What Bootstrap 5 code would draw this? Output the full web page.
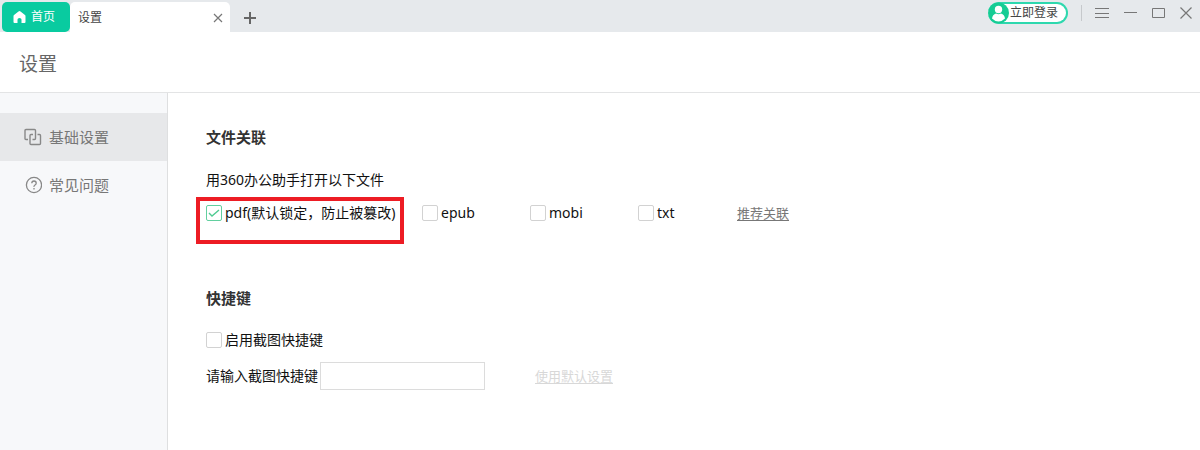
<!DOCTYPE html>
<html lang="zh-CN">
<head>
<meta charset="utf-8">
<meta name="viewport" content="width=device-width, initial-scale=1">
<title>设置</title>
<link href="https://cdn.jsdelivr.net/npm/bootstrap@5.3.0/dist/css/bootstrap.min.css" rel="stylesheet">
<style>
  body { font-family: "Noto Sans", "Noto Sans CJK SC", sans-serif; font-size: 14px; line-height: 20px; color: #111; background: #fff; }
  button { background: none; border: 0; padding: 0; color: inherit; }
  svg { display: block; fill: none; }
  .titlebar { background: #e6e9ec; height: 32px; }
  .tab-btn { height: 30px; font-size: 12px; line-height: 18px; }
  .tab-home { width: 68px; margin-left: 2px; padding-left: 10px; background: #09cba0; color: #fff; border-radius: 5px; }
  .tab-page { width: 160px; padding: 2px 7px 0 8px; background: #fff; color: #444; border-radius: 5px 5px 0 0; }
  .tab-add { margin-left: 14px; }
  .login { height: 22px; margin-top: 2px; padding-right: 8px; border: 2px solid #2ed8ae; border-left: 0; border-radius: 11px; background: #fff; color: #444; font-size: 12px; line-height: 18px; }
  .split { width: 1px; height: 16px; margin: 0 13px; background: #c6c9cc; }
  .win { height: 26px; padding-right: 8px; color: #777; }
  .win-buttons { gap: 15px; }
  .page-head { height: 61px; padding: 4px 19px 0; border-bottom: 1px solid #e3e4e5; }
  .page-head h1 { font-size: 19px; line-height: 28px; color: #666; font-weight: 400; }
  .side { width: 168px; background: #f7f8fa; border-right: 1px solid #dedfe0; padding-top: 20px; }
  .side a { height: 48px; padding-left: 24px; gap: 7px; font-size: 15px; color: #777; text-decoration: none; }
  .side a.active { background: #e7e8ea; }
  .content { padding: 34px 38px 0; }
  h2 { font-size: 15px; line-height: 20px; font-weight: 700; color: #333; }
  .intro { margin: 23px 0 7px; }
  .opt { gap: 3px; }
  .opt .form-check-input { width: 16px; height: 16px; margin: 0; border: 1px solid #d2d2d2; border-radius: 2px; background-color: #fff; }
  .opt .form-check-input:checked { border-color: #62cf9f; background-color: #fff; background-size: 16px; background-image: url("data:image/svg+xml,%3Csvg xmlns='http://www.w3.org/2000/svg' viewBox='0 0 16 16'%3E%3Cpath d='M3 8l3 3 7-6' fill='none' stroke='%2350cb92' stroke-width='1.4'/%3E%3C/svg%3E"); }
  .marked { width: 208px; height: 47px; margin-left: -10px; padding: 2px 0 0 6px; border: 4px solid #ed1c24; }
  .files { gap: 18px; }
  .file-type { width: 90px; padding-top: 6px; }
  .file-txt { width: 81px; }
  .shortcuts { margin-top: 44px; }
  .shortcuts .opt { margin: 22px 0 12px; }
  .text-link { font-size: 13px; color: #777; text-underline-offset: 2px; }
  .files .text-link { padding-top: 6px; }
  .text-link.off { color: #d8d8d8; margin-left: 50px; }
  .key-input { width: 165px; height: 28px; margin-left: 2px; border: 1px solid #dcdcdc; border-radius: 0; }
</style>
</head>
<body class="min-vh-100 d-flex flex-column">
<header class="titlebar d-flex justify-content-between">
  <nav class="d-flex align-items-end">
    <button class="tab-btn tab-home d-flex align-items-center gap-1" type="button">
      <svg width="15" height="14" viewBox="0 0 15 14"><path fill="#fff" d="M7.500 1Q8 1 8.500 1.400L13 5Q13.500 5.500 13.500 6.200V12Q13.500 13 12.500 13H9.500V9.500Q9.500 8 7.500 8T5.500 9.500V13H2.500Q1.500 13 1.500 12V6.200Q1.500 5.500 2 5L6.500 1.400Q7 1 7.500 1Z"/></svg>
      <span>首页</span>
    </button>
    <div class="tab-btn tab-page d-flex align-items-center justify-content-between">
      <span>设置</span>
      <button type="button" aria-label="关闭标签"><svg width="10" height="10" viewBox="0 0 10 10" stroke="#777" stroke-width="1.200"><path d="M1 1l8 8M9 1L1 9"/></svg></button>
    </div>
    <button class="tab-add pb-2" type="button" aria-label="新标签"><svg width="12" height="12" viewBox="0 0 12 12" stroke="#666" stroke-width="2"><path d="M0 6h12M6 0v12"/></svg></button>
  </nav>
  <div class="d-flex align-items-start">
    <button class="login d-flex align-items-center" type="button">
      <svg width="22" height="22" viewBox="0 0 22 22"><circle cx="10.500" cy="11" r="10.500" fill="#16cc94"/><circle cx="10.500" cy="7.500" r="3.700" fill="#fff"/><path fill="#fff" d="M4 16.500Q4.500 12.500 8 11.500Q10.500 13 13 11.500Q16.500 12.500 17 16.500Q14 19.500 10.500 19.500T4 16.500Z"/></svg>
      <span>立即登录</span>
    </button>
    <div class="win d-flex align-items-center">
      <span class="split"></span>
      <div class="win-buttons d-flex align-items-center">
        <button type="button" aria-label="菜单"><svg width="14" height="14" viewBox="0 0 14 14" stroke="currentColor"><path d="M0 2.500h14M0 7.500h14M0 11.500h14"/></svg></button>
        <button type="button" aria-label="最小化"><svg width="13" height="14" viewBox="0 0 13 14" stroke="currentColor"><path d="M0 6.500h13"/></svg></button>
        <button type="button" aria-label="最大化"><svg width="13" height="14" viewBox="0 0 13 14" stroke="currentColor"><path d="M.5 2.500h12v9H.5z"/></svg></button>
        <button type="button" aria-label="关闭"><svg width="12" height="14" viewBox="0 0 12 14" stroke="currentColor" stroke-width="1.200"><path d="M.5 1.500l11 11M11.500 1.500L.5 12.500"/></svg></button>
      </div>
    </div>
  </div>
</header>
<div class="page-head d-flex align-items-center"><h1 class="m-0">设置</h1></div>
<div class="d-flex flex-grow-1">
  <aside class="side flex-shrink-0">
    <a class="active d-flex align-items-center" href="#basic">
      <svg width="18" height="18" viewBox="0 0 18 18" stroke="#888" stroke-width="1.400"><path d="M4 11.500H2Q1 11.500 1 10.500V2.500Q1 1.500 2 1.500H10.500Q11.500 1.500 11.500 2.500V10.500Q11.500 11.500 10.500 11.500H8.500M9 6.500H7Q6 6.500 6 7.500V15.500Q6 16.500 7 16.500H15.500Q16.500 16.500 16.500 15.500V7.500Q16.500 6.500 15.500 6.500H13.500"/></svg>
      <span>基础设置</span>
    </a>
    <a class="d-flex align-items-center" href="#faq">
      <svg width="18" height="18" viewBox="0 0 18 18" stroke="#888" stroke-width="1.300"><circle cx="10" cy="9" r="7.600"/><path d="M7.800 7.300Q7.800 5 10 5T12.200 7.200Q12.200 8.200 11 9T10 10.800M10 12v1.500"/></svg>
      <span>常见问题</span>
    </a>
  </aside>
  <main class="content flex-grow-1">
    <section>
      <h2 class="m-0">文件关联</h2>
      <p class="intro">用360办公助手打开以下文件</p>
      <div class="files d-flex align-items-start">
        <div class="marked"><div class="opt d-flex align-items-center"><input class="form-check-input" type="checkbox" id="pdf" checked><label for="pdf">pdf(默认锁定，防止被篡改)</label></div></div>
        <div class="opt file-type d-flex align-items-center"><input class="form-check-input" type="checkbox" id="epub"><label for="epub">epub</label></div>
        <div class="opt file-type d-flex align-items-center"><input class="form-check-input" type="checkbox" id="mobi"><label for="mobi">mobi</label></div>
        <div class="opt file-type file-txt d-flex align-items-center"><input class="form-check-input" type="checkbox" id="txt"><label for="txt">txt</label></div>
        <a class="text-link" href="#recommend">推荐关联</a>
      </div>
    </section>
    <section class="shortcuts">
      <h2 class="m-0">快捷键</h2>
      <div class="opt d-flex align-items-center"><input class="form-check-input" type="checkbox" id="shot"><label for="shot">启用截图快捷键</label></div>
      <div class="d-flex align-items-center">
        <label for="key">请输入截图快捷键</label>
        <input class="key-input" type="text" id="key">
        <a class="text-link off" href="#default">使用默认设置</a>
      </div>
    </section>
  </main>
</div>
<script src="https://cdn.jsdelivr.net/npm/bootstrap@5.3.0/dist/js/bootstrap.bundle.min.js"></script>
</body>
</html>
